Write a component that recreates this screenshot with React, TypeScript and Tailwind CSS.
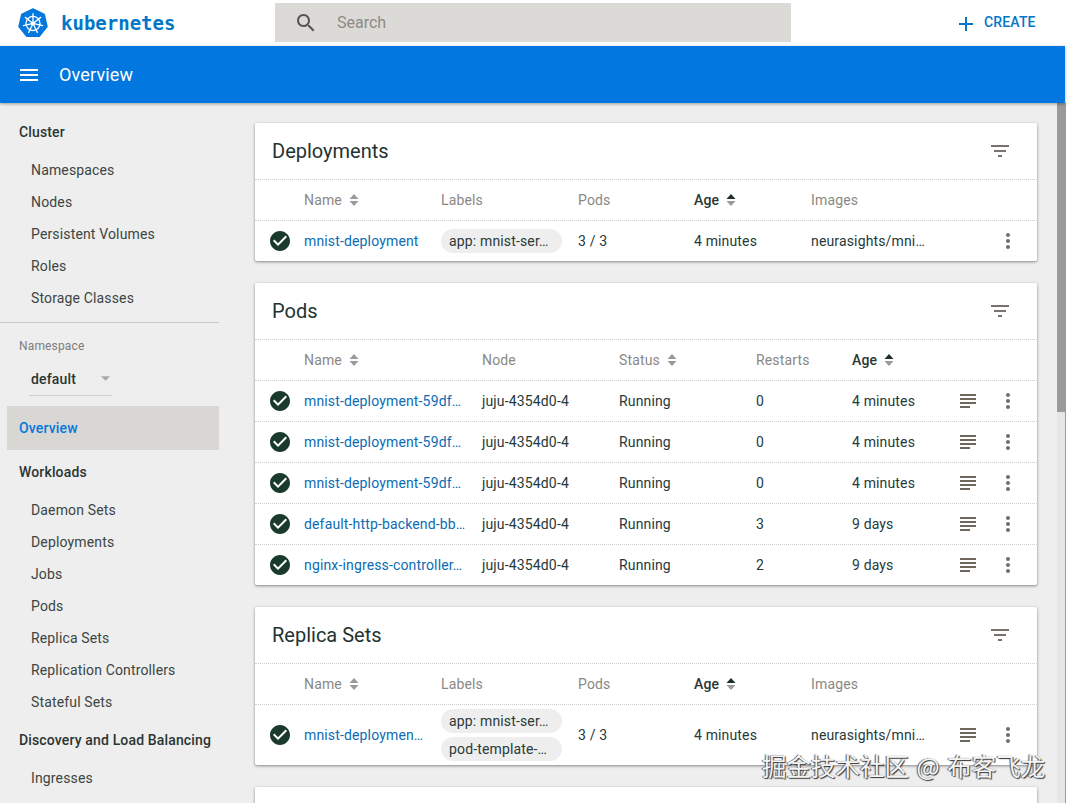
import React from 'react';

const font = { fontFamily: 'Roboto, sans-serif' };

const Icon: React.FC<{ d: string; className: string }> = ({ d, className }) => (
  <svg viewBox="0 0 24 24" fill="currentColor" className={className}>
    <path d={d} />
  </svg>
);

const CHECK = 'M12 2C6.48 2 2 6.48 2 12s4.48 10 10 10 10-4.48 10-10S17.52 2 12 2zm-2 15l-5-5 1.41-1.41L10 14.17l7.59-7.59L19 8l-9 9z';
const FILTER = 'M10 18h4v-2h-4v2zM3 6v2h18V6H3zm3 7h12v-2H6v2z';
const LOGS = 'M14 17H4v2h10v-2zm6-8H4v2h16V9zM4 15h16v-2H4v2zM4 5v2h16V5H4z';
const MORE = 'M12 8c1.1 0 2-.9 2-2s-.9-2-2-2-2 .9-2 2 .9 2 2 2zm0 2c-1.1 0-2 .9-2 2s.9 2 2 2 2-.9 2-2-.9-2-2-2zm0 6c-1.1 0-2 .9-2 2s.9 2 2 2 2-.9 2-2-.9-2-2-2z';
const SEARCH = 'M15.5 14h-.79l-.28-.27C15.41 12.59 16 11.11 16 9.5 16 5.91 13.09 3 9.5 3S3 5.91 3 9.5 5.91 16 9.5 16c1.61 0 3.09-.59 4.23-1.57l.27.28v.79l5 4.99L20.49 19l-4.99-5zm-6 0C7.01 14 5 11.99 5 9.5S7.01 5 9.5 5 14 7.01 14 9.5 11.99 14 9.5 14z';
const MENU = 'M3 18h18v-2H3v2zm0-5h18v-2H3v2zm0-7v2h18V6H3z';
const ADD = 'M19 13h-6v6h-2v-6H5v-2h6V5h2v6h6v2z';

const KubeLogo = () => (
  <svg viewBox="0 0 32 32" className="w-[30px] h-[30px]">
    <path d="M16 1 L28 6.8 L31 19.8 L22.7 30.2 L9.3 30.2 L1 19.8 L4 6.8 Z" fill="#0277dd" stroke="#0277dd" strokeWidth="1.5" strokeLinejoin="round" />
    <g stroke="#fff" fill="none" strokeWidth="1.4" strokeLinecap="round">
      <circle cx="16" cy="16.5" r="7.5" />
      <path d="M16 16.5V6 M16 16.5L24.2 10 M16 16.5L26.2 18.8 M16 16.5L20.6 26 M16 16.5L11.4 26 M16 16.5L5.8 18.8 M16 16.5L7.8 10" />
    </g>
    <circle cx="16" cy="16.5" r="2" fill="#fff" />
  </svg>
);

const SortIcon: React.FC<{ active?: boolean }> = ({ active }) => (
  <svg viewBox="0 0 10 14" className="w-[10px] h-[14px] ml-[7px]">
    <path d="M5 1 L9.5 6 H0.5 Z" fill={active ? '#1f2d2d' : '#9a9a9a'} />
    <path d="M5 13 L9.5 8 H0.5 Z" fill="#9a9a9a" />
  </svg>
);

const SideHead: React.FC<{ children: string }> = ({ children }) => (
  <div className="h-8 flex items-center pl-[19px] text-sm font-medium text-[#2b3533]">{children}</div>
);

const SideList: React.FC<{ items: string[] }> = ({ items }) => (
  <div className="mt-[6px]">
    {items.map((t) => (
      <div key={t} className="h-8 flex items-center pl-[31px] text-sm text-[#3c4543]">{t}</div>
    ))}
  </div>
);

const Sidebar = () => (
  <div className="w-[255px] shrink-0 pt-[13px]">
    <SideHead>Cluster</SideHead>
    <SideList items={['Namespaces', 'Nodes', 'Persistent Volumes', 'Roles', 'Storage Classes']} />
    <div className="mt-2 w-[219px] border-t border-[#c9c9c9]" />
    <div className="pl-[19px] mt-[15px] text-xs leading-4 text-[#7d7d7d]">Namespace</div>
    <div className="ml-[29px] mt-[15px] w-[83px] h-[27px] border-b border-[#cfcfcf] flex items-start justify-between pl-[2px] pr-[2px]">
      <span className="text-sm leading-[20px] font-medium text-[#2b3533]">default</span>
      <svg viewBox="0 0 10 5" className="w-[9px] h-[5px] mt-[7px]">
        <path d="M0 0H10L5 5Z" fill="#a8a8a8" />
      </svg>
    </div>
    <div className="ml-[7px] mt-[10px] w-[212px] h-[44px] bg-[#d9d7d4] flex items-center pl-[12px] text-sm font-medium text-[#0277dd]">Overview</div>
    <div className="mt-[6px]">
      <SideHead>Workloads</SideHead>
    </div>
    <SideList items={['Daemon Sets', 'Deployments', 'Jobs', 'Pods', 'Replica Sets', 'Replication Controllers', 'Stateful Sets']} />
    <div className="mt-[6px]">
      <SideHead>Discovery and Load Balancing</SideHead>
    </div>
    <SideList items={['Ingresses']} />
  </div>
);

const DEPLOY_GRID = 'grid grid-cols-[49px_137px_137px_116px_117px_137px_40px_40px_9px] items-center';
const PODS_GRID = 'grid grid-cols-[49px_178px_137px_137px_96px_96px_40px_40px_9px] items-center';

const Card: React.FC<{ title: string; children?: React.ReactNode }> = ({ title, children }) => (
  <div className="bg-white rounded-[2px] shadow-[0_1px_3px_rgba(0,0,0,0.45)]">
    <div className="h-[56px] flex items-center justify-between pl-[17px] pr-[25px]">
      <span className="text-xl tracking-normal text-[#1f3331]">{title}</span>
      <Icon d={FILTER} className="w-6 h-6 text-[#7a726a]" />
    </div>
    {children}
  </div>
);

const HeadCell: React.FC<{ label: string; sort?: boolean; active?: boolean }> = ({ label, sort, active }) => (
  <div className={active ? 'flex items-center text-sm font-medium text-[#2b3533]' : 'flex items-center text-sm text-[#8a8885]'}>
    {label}
    {sort && <SortIcon active={active} />}
  </div>
);

const Status = () => (
  <div className="pl-[13px]">
    <Icon d={CHECK} className="w-6 h-6 text-[#1a3a2c]" />
  </div>
);

const Actions: React.FC<{ logs?: boolean }> = ({ logs }) => (
  <>
    <div className="flex justify-center">
      {logs && <Icon d={LOGS} className="w-6 h-6 text-[#6f665e]" />}
    </div>
    <div className="flex justify-center">
      <Icon d={MORE} className="w-6 h-6 text-[#6f6f6f]" />
    </div>
  </>
);

const Chip: React.FC<{ children: string }> = ({ children }) => (
  <div className="w-[121px] h-[24px] rounded-full bg-[#eeeeee] flex items-center pl-2 text-sm text-[#2b3a3a]">{children}</div>
);

const Link: React.FC<{ children: string }> = ({ children }) => (
  <span className="text-sm text-[#0b6cb5] whitespace-nowrap">{children}</span>
);

const Cell: React.FC<{ children: string }> = ({ children }) => (
  <span className="text-sm text-[#26393a] whitespace-nowrap">{children}</span>
);

const WorkloadHeader = () => (
  <div className={`${DEPLOY_GRID} h-[41px] border-t border-dotted border-[#cfcfcf]`}>
    <div />
    <HeadCell label="Name" sort />
    <HeadCell label="Labels" />
    <HeadCell label="Pods" />
    <HeadCell label="Age" sort active />
    <HeadCell label="Images" />
  </div>
);

const pods = [
  { name: 'mnist-deployment-59df…', restarts: '0', age: '4 minutes' },
  { name: 'mnist-deployment-59df…', restarts: '0', age: '4 minutes' },
  { name: 'mnist-deployment-59df…', restarts: '0', age: '4 minutes' },
  { name: 'default-http-backend-bb…', restarts: '3', age: '9 days' },
  { name: 'nginx-ingress-controller…', restarts: '2', age: '9 days' },
];

const App: React.FC = () => {
  return (
    <div className="relative w-[1069px] h-[803px] overflow-hidden bg-white flex flex-col tracking-[0.15px]" style={font}>
      <div className="w-[1065px] h-[46px] shrink-0 bg-white flex items-center">
        <div className="ml-[18px]">
          <KubeLogo />
        </div>
        <span className="ml-[13px] w-[214px] text-[19px] tracking-normal font-bold text-[#0277c8]" style={{ fontFamily: '"DejaVu Sans Mono", monospace' }}>kubernetes</span>
        <div className="w-[516px] h-[39px] mb-[1px] bg-[#dcdad6] flex items-center pl-[19px]">
          <Icon d={SEARCH} className="w-6 h-6 text-[#555555]" />
          <span className="ml-[19px] text-base tracking-normal text-[#8c8a86]">Search</span>
        </div>
        <div className="ml-[163px] flex items-center text-[#0277c8]">
          <Icon d={ADD} className="w-6 h-6 mt-[1px]" />
          <span className="ml-[6px] mb-[2px] text-sm font-medium">CREATE</span>
        </div>
      </div>

      <div className="relative z-10 w-[1065px] h-[57px] shrink-0 bg-[#0277e0] flex items-center pl-[17px] text-white shadow-[0_1px_3px_rgba(0,0,0,0.35)]">
        <Icon d={MENU} className="w-6 h-6" />
        <span className="ml-[18px] text-lg">Overview</span>
      </div>

      <div className="w-[1066px] flex-1 min-h-0 flex bg-[#eeeeee] overflow-hidden border-r border-[#9a9a9a]">
        <Sidebar />
        <div className="flex-1 pt-5 pr-5 flex flex-col gap-[22px]">
          <Card title="Deployments">
            <WorkloadHeader />
            <div className={`${DEPLOY_GRID} h-[41px] border-t border-dotted border-[#cfcfcf]`}>
              <Status />
              <Link>mnist-deployment</Link>
              <Chip>app: mnist-ser…</Chip>
              <Cell>3 / 3</Cell>
              <Cell>4 minutes</Cell>
              <Cell>neurasights/mni…</Cell>
              <Actions />
            </div>
          </Card>

          <Card title="Pods">
            <div className={`${PODS_GRID} h-[41px] border-t border-dotted border-[#cfcfcf]`}>
              <div />
              <HeadCell label="Name" sort />
              <HeadCell label="Node" />
              <HeadCell label="Status" sort />
              <HeadCell label="Restarts" />
              <HeadCell label="Age" sort active />
            </div>
            {pods.map((p, i) => (
              <div key={i} className={`${PODS_GRID} h-[41px] border-t border-dotted border-[#cfcfcf]`}>
                <Status />
                <Link>{p.name}</Link>
                <Cell>juju-4354d0-4</Cell>
                <Cell>Running</Cell>
                <Cell>{p.restarts}</Cell>
                <Cell>{p.age}</Cell>
                <Actions logs />
              </div>
            ))}
          </Card>

          <Card title="Replica Sets">
            <WorkloadHeader />
            <div className={`${DEPLOY_GRID} h-[61px] border-t border-dotted border-[#cfcfcf]`}>
              <Status />
              <Link>mnist-deploymen…</Link>
              <div className="flex flex-col gap-[4px]">
                <Chip>app: mnist-ser…</Chip>
                <Chip>pod-template-…</Chip>
              </div>
              <Cell>3 / 3</Cell>
              <Cell>4 minutes</Cell>
              <Cell>neurasights/mni…</Cell>
              <Actions logs />
            </div>
          </Card>

          {/* next card, only its top edge is on screen */}
          <div className="h-[56px] shrink-0 bg-white rounded-[2px] shadow-[0_1px_3px_rgba(0,0,0,0.45)]" />
        </div>
        <div className="w-2 shrink-0 self-stretch bg-[#e6e6e6]">
          <div className="h-[309px] bg-[#9a9a9a]" />
        </div>
      </div>

      {/* watermark */}
      <div
        className="absolute left-[762px] top-[750px] text-[24.5px] leading-8 tracking-normal [word-spacing:2px] whitespace-pre text-[#f4f4f4] [text-shadow:1px_1px_1px_#333,-1px_0_1px_#555]"
        style={{ fontFamily: '"Noto Sans CJK SC", sans-serif' }}
      >
        掘金技术社区 @ 布客飞龙
      </div>
    </div>
  );
};

export default App;
